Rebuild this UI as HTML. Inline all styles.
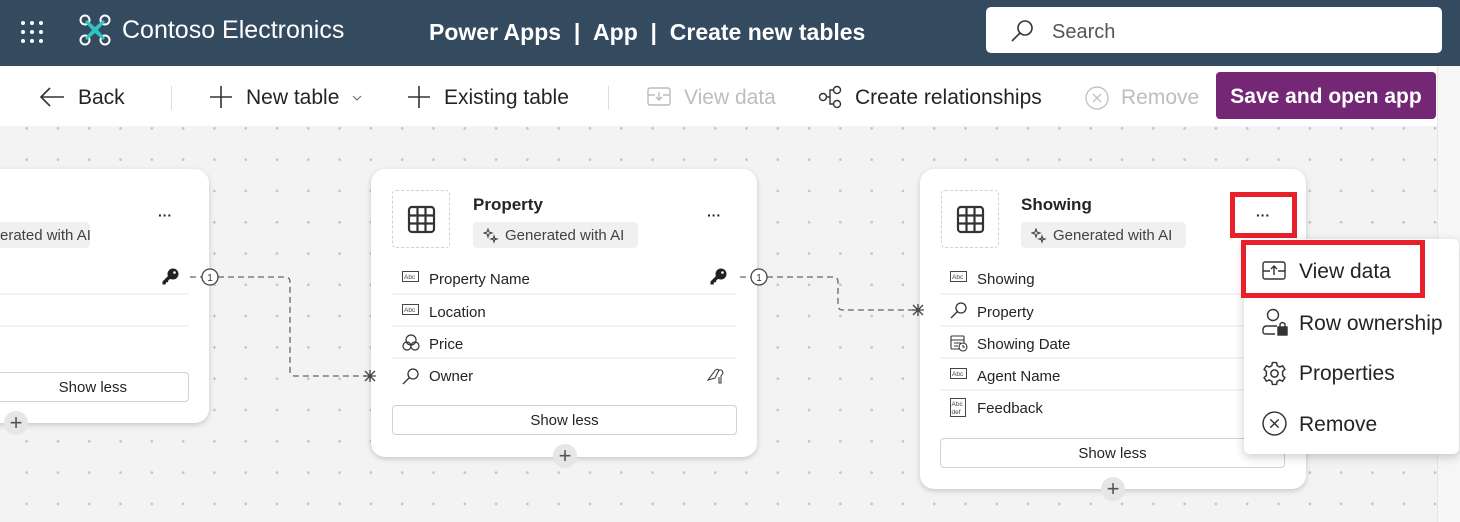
<!DOCTYPE html>
<html><head><meta charset="utf-8"><style>
*{box-sizing:border-box;margin:0;padding:0}
body{width:1460px;height:522px;overflow:hidden;font-family:"Liberation Sans",sans-serif;background:#f3f3f3;position:relative;color:#242424}
.hdr{position:absolute;left:0;top:0;width:1460px;height:66px;background:#344a5f;color:#fff}
.tb{position:absolute;left:0;top:66px;width:1437px;height:60px;background:#fff}
.canvas{position:absolute;left:0;top:126px;width:1437px;height:396px;background-color:#f3f3f3;background-image:radial-gradient(circle,#c4c4c4 1.1px,transparent 1.6px);background-size:31.3px 31.3px;background-position:11px 18px}
.sb{position:absolute;left:1437px;top:66px;width:23px;height:456px;background:#f6f6f6;border-left:1px solid #e6e6e6}
.t{position:absolute;white-space:nowrap}
.card{position:absolute;background:#fff;border-radius:14px;box-shadow:0 2px 6px rgba(0,0,0,.18)}
.ib{position:absolute;width:58px;height:58px;border:1px dashed #d0d0d0;border-radius:4px}
.badge{position:absolute;height:26px;background:#f0f0f0;border-radius:4px;font-size:15px;color:#424242;padding:5px 0 0 32px}
.row{position:absolute;height:32px;border-bottom:2px solid #f3f3f3;font-size:15px;padding:9px 0 0 37px}
.sl{position:absolute;height:30px;border:1px solid #d1d1d1;border-radius:4px;font-size:15px;text-align:center;line-height:29px;background:#fff}
.plus{position:absolute;width:24px;height:24px;border-radius:12px;background:#e6e6e6;text-align:center;line-height:23px;font-size:22px;color:#555}
.dots{position:absolute;font-size:14px;font-weight:bold;letter-spacing:0px}
.tbtxt{font-size:21px;color:#242424}
</style></head><body>
<div class="hdr">
 <svg class="t" style="left:20px;top:20px" width="24" height="24" viewBox="0 0 24 24" fill="#fff"><circle cx="3" cy="3" r="2"/><circle cx="12" cy="3" r="2"/><circle cx="21" cy="3" r="2"/><circle cx="3" cy="12" r="2"/><circle cx="12" cy="12" r="2"/><circle cx="21" cy="12" r="2"/><circle cx="3" cy="21" r="2"/><circle cx="12" cy="21" r="2"/><circle cx="21" cy="21" r="2"/></svg>
 <svg class="t" style="left:79px;top:14px" width="32" height="32" viewBox="0 0 32 32"><g fill="none" stroke="#fff" stroke-width="2"><circle cx="6" cy="6" r="4.5"/><circle cx="26" cy="6" r="4.5"/><circle cx="6" cy="26" r="4.5"/><circle cx="26" cy="26" r="4.5"/></g><path d="M8 6 L16 13 L24 6 L26 8 L19 16 L26 24 L24 26 L16 19 L8 26 L6 24 L13 16 L6 8Z" fill="#2ec4c4"/></svg>
 <div class="t" style="left:122px;top:16px;font-size:25px">Contoso Electronics</div>
 <div class="t" style="left:429px;top:19px;font-size:23px;font-weight:bold">Power Apps&nbsp; | &nbsp;App&nbsp; | &nbsp;Create new tables</div>
 <div class="t" style="left:986px;top:7px;width:456px;height:46px;background:#fff;border-radius:5px"></div>
 <svg class="t" style="left:1010px;top:19px" width="24" height="24" viewBox="0 0 24 24" fill="none" stroke="#333" stroke-width="1.6"><circle cx="15" cy="9" r="7"/><path d="M10 14 L2 22"/></svg>
 <div class="t" style="left:1052px;top:21px;font-size:20px;color:#555">Search</div>
</div>
<div class="tb">
 <svg class="t" style="left:39px;top:20px" width="26" height="22" viewBox="0 0 26 22" fill="none" stroke="#333" stroke-width="1.6"><path d="M25 11H2M11 2L2 11L11 20"/></svg>
 <div class="t tbtxt" style="left:78px;top:20px">Back</div>
 <div class="t" style="left:171px;top:20px;width:1px;height:24px;background:#ddd"></div>
 <svg class="t" style="left:209px;top:19px" width="24" height="24" viewBox="0 0 24 24" stroke="#333" stroke-width="1.6"><path d="M12 1V23M1 12H23"/></svg>
 <div class="t tbtxt" style="left:246px;top:20px">New table</div>
 <svg class="t" style="left:352px;top:29px" width="10" height="6" viewBox="0 0 10 6" fill="none" stroke="#666"><path d="M1 1L5 5L9 1"/></svg>
 <svg class="t" style="left:407px;top:19px" width="24" height="24" viewBox="0 0 24 24" stroke="#333" stroke-width="1.6"><path d="M12 1V23M1 12H23"/></svg>
 <div class="t tbtxt" style="left:444px;top:20px">Existing table</div>
 <div class="t" style="left:608px;top:20px;width:1px;height:24px;background:#ddd"></div>
 <svg class="t" style="left:647px;top:21px" width="24" height="20" viewBox="0 0 24 20" fill="none" stroke="#bbb" stroke-width="1.4"><rect x="1" y="1" width="22" height="17" rx="2"/><path d="M1 8H8M16 8H23M12 5V13M9 10L12 13L15 10"/></svg>
 <div class="t tbtxt" style="left:684px;top:20px;color:#bdbdbd">View data</div>
 <svg class="t" style="left:818px;top:19px" width="26" height="24" viewBox="0 0 26 24" fill="none" stroke="#333" stroke-width="1.4"><circle cx="5" cy="12" r="3.5"/><circle cx="19" cy="5" r="3.5"/><circle cx="19" cy="19" r="3.5"/><path d="M8.5 12H12V5H15.5M12 12V19H15.5"/></svg>
 <div class="t tbtxt" style="left:855px;top:20px">Create relationships</div>
 <svg class="t" style="left:1085px;top:20px" width="24" height="24" viewBox="0 0 24 24" fill="none" stroke="#c4c4c4" stroke-width="1.4"><circle cx="12" cy="12" r="11"/><path d="M8 8L16 16M16 8L8 16"/></svg>
 <div class="t tbtxt" style="left:1121px;top:20px;color:#bdbdbd">Remove</div>
 <div class="t" style="left:1216px;top:6px;width:220px;height:47px;background:#742774;border-radius:4px;color:#fff;font-size:21px;font-weight:bold;text-align:center;padding-top:13px;line-height:24px">Save and open app</div>
</div>
<div class="canvas"></div>
<div class="sb"></div>

<!-- left card -->
<div class="card" style="left:-20px;top:169px;width:229px;height:254px"></div>
<div class="dots t" style="left:158px;top:207px">···</div>
<div class="badge t" style="left:-20px;top:222px;width:110px;padding-left:20px">erated with AI</div>
<div class="row t" style="left:0;top:262px;width:189px;height:33px"></div>
<div class="row t" style="left:0;top:295px;width:189px"></div>
<div class="row t" style="left:0;top:327px;width:189px;border-bottom:none"></div>
<svg class="t" style="left:161px;top:268px" width="18" height="18" viewBox="0 0 18 18"><circle cx="12" cy="6" r="5.5" fill="#222"/><path d="M8 7L1.5 13.5L1.5 16.5L4.5 16.5L5 14.5L7 14L7.5 12L11 10Z" fill="#222"/><circle cx="13.5" cy="4.5" r="1.3" fill="#fff"/></svg>
<div class="sl t" style="left:-20px;top:372px;width:209px">&nbsp;&nbsp;&nbsp;&nbsp;Show less</div>
<div class="plus t" style="left:4px;top:411px">+</div>

<!-- property card -->
<div class="card" style="left:371px;top:169px;width:386px;height:288px"></div>
<div class="ib" style="left:392px;top:190px"></div>
<svg class="t" style="left:407px;top:205px" width="29" height="29" viewBox="0 0 29 29" fill="none" stroke="#333" stroke-width="2.2"><rect x="2" y="2" width="25" height="25" rx="3"/><path d="M10.5 2V27M18.5 2V27M2 10.5H27M2 18.5H27"/></svg>
<div class="t" style="left:473px;top:195px;font-size:17px;font-weight:bold">Property</div>
<div class="badge t" style="left:473px;top:222px;width:165px">Generated with AI</div>
<svg class="t" style="left:483px;top:228px" width="16" height="16" viewBox="0 0 16 16" fill="none" stroke="#444" stroke-width="1.1"><path d="M5 1L6 4L9 5L6 6L5 9L4 6L1 5L4 4Z"/><path d="M11 8L11.7 10.3L14 11L11.7 11.7L11 14L10.3 11.7L8 11L10.3 10.3Z"/></svg>
<div class="dots t" style="left:707px;top:207px">···</div>
<div class="row t" style="left:392px;top:262px;width:345px;height:33px">Property Name</div>
<div class="row t" style="left:392px;top:295px;width:345px">Location</div>
<div class="row t" style="left:392px;top:327px;width:345px">Price</div>
<div class="row t" style="left:392px;top:359px;width:345px;border-bottom:none">Owner</div>
<svg class="t" style="left:402px;top:271px" width="17" height="14" viewBox="0 0 17 14"><rect x=".5" y=".5" width="16" height="10" fill="none" stroke="#444"/><text x="2" y="8" font-size="6.5" fill="#444" font-family="Liberation Sans">Abc</text></svg>
<svg class="t" style="left:402px;top:304px" width="17" height="14" viewBox="0 0 17 14"><rect x=".5" y=".5" width="16" height="10" fill="none" stroke="#444"/><text x="2" y="8" font-size="6.5" fill="#444" font-family="Liberation Sans">Abc</text></svg>
<svg class="t" style="left:402px;top:334px" width="18" height="18" viewBox="0 0 18 18" fill="none" stroke="#333" stroke-width="1.2"><circle cx="9" cy="6" r="5"/><circle cx="5" cy="12" r="4"/><circle cx="13" cy="12" r="4"/></svg>
<svg class="t" style="left:402px;top:367px" width="18" height="18" viewBox="0 0 18 18" fill="none" stroke="#333" stroke-width="1.3"><circle cx="11" cy="7" r="5"/><path d="M7.5 10.5L1 17"/></svg>
<svg class="t" style="left:709px;top:268px" width="18" height="18" viewBox="0 0 18 18"><circle cx="12" cy="6" r="5.5" fill="#222"/><path d="M8 7L1.5 13.5L1.5 16.5L4.5 16.5L5 14.5L7 14L7.5 12L11 10Z" fill="#222"/><circle cx="13.5" cy="4.5" r="1.3" fill="#fff"/></svg>
<svg class="t" style="left:706px;top:366px" width="20" height="18" viewBox="0 0 20 18" fill="none" stroke="#444" stroke-width="1.1"><path d="M2 14L8 6Q10 2 13 4L9 12ZM12 5Q16 2 17 7L15 10L15 17L13 17L13 11"/></svg>
<div class="sl t" style="left:392px;top:405px;width:345px">Show less</div>
<div class="plus t" style="left:553px;top:444px">+</div>

<!-- showing card -->
<div class="card" style="left:920px;top:169px;width:386px;height:320px"></div>
<div class="ib" style="left:941px;top:190px"></div>
<svg class="t" style="left:956px;top:205px" width="29" height="29" viewBox="0 0 29 29" fill="none" stroke="#333" stroke-width="2.2"><rect x="2" y="2" width="25" height="25" rx="3"/><path d="M10.5 2V27M18.5 2V27M2 10.5H27M2 18.5H27"/></svg>
<div class="t" style="left:1021px;top:195px;font-size:17px;font-weight:bold">Showing</div>
<div class="badge t" style="left:1021px;top:222px;width:165px">Generated with AI</div>
<svg class="t" style="left:1031px;top:228px" width="16" height="16" viewBox="0 0 16 16" fill="none" stroke="#444" stroke-width="1.1"><path d="M5 1L6 4L9 5L6 6L5 9L4 6L1 5L4 4Z"/><path d="M11 8L11.7 10.3L14 11L11.7 11.7L11 14L10.3 11.7L8 11L10.3 10.3Z"/></svg>
<div class="dots t" style="left:1256px;top:207px">···</div>
<div class="t" style="left:1230px;top:192px;width:67px;height:46px;border:5px solid #e8202a"></div>
<div class="row t" style="left:940px;top:262px;width:345px;height:33px">Showing</div>
<div class="row t" style="left:940px;top:295px;width:345px">Property</div>
<div class="row t" style="left:940px;top:327px;width:345px">Showing Date</div>
<div class="row t" style="left:940px;top:359px;width:345px">Agent Name</div>
<div class="row t" style="left:940px;top:391px;width:345px;border-bottom:none">Feedback</div>
<svg class="t" style="left:950px;top:271px" width="17" height="14" viewBox="0 0 17 14"><rect x=".5" y=".5" width="16" height="10" fill="none" stroke="#444"/><text x="2" y="8" font-size="6.5" fill="#444" font-family="Liberation Sans">Abc</text></svg>
<svg class="t" style="left:950px;top:301px" width="18" height="18" viewBox="0 0 18 18" fill="none" stroke="#333" stroke-width="1.3"><circle cx="11" cy="7" r="5"/><path d="M7.5 10.5L1 17"/></svg>
<svg class="t" style="left:950px;top:334px" width="18" height="18" viewBox="0 0 18 18" fill="none" stroke="#333" stroke-width="1.1"><rect x="1" y="2" width="13" height="13" rx="1"/><path d="M1 6H14M4 9H11M4 12H8"/><circle cx="13" cy="13" r="4" fill="#fff"/><path d="M13 11V13H15"/></svg>
<svg class="t" style="left:950px;top:368px" width="17" height="14" viewBox="0 0 17 14"><rect x=".5" y=".5" width="16" height="10" fill="none" stroke="#444"/><text x="2" y="8" font-size="6.5" fill="#444" font-family="Liberation Sans">Abc</text></svg>
<svg class="t" style="left:950px;top:398px" width="16" height="20" viewBox="0 0 16 20"><rect x=".5" y=".5" width="15" height="18" fill="none" stroke="#444"/><text x="1.5" y="8" font-size="6.5" fill="#444" font-family="Liberation Sans">Abc</text><text x="1.5" y="16" font-size="6.5" fill="#444" font-family="Liberation Sans">def</text></svg>
<div class="sl t" style="left:940px;top:438px;width:345px">Show less</div>
<div class="plus t" style="left:1101px;top:477px">+</div>

<!-- connectors -->
<svg class="t" style="left:0;top:0" width="1460" height="522">
 <g fill="none" stroke="#666" stroke-width="1.3" stroke-dasharray="6 4">
  <path d="M190 277H202M218 277H285Q290 277 290 282V371Q290 376 295 376H366"/>
  <path d="M740 277H751M767 277H833Q838 277 838 282V305Q838 310 843 310H914"/>
 </g>
 <g fill="#fff" stroke="#444" stroke-width="1.3"><circle cx="210" cy="277" r="8"/><circle cx="759" cy="277" r="8"/></g>
 <g font-size="10" font-family="Liberation Sans" fill="#333" text-anchor="middle"><text x="210" y="281">1</text><text x="759" y="281">1</text></g>
 <g stroke="#444" stroke-width="1.3"><path d="M364 376H376M370 370V382M365 371L375 381M375 371L365 381"/><path d="M912 310H924M918 304V316M913 305L923 315M923 305L913 315"/></g>
</svg>

<!-- menu -->
<div class="t" style="left:1244px;top:239px;width:215px;height:215px;background:#fff;border-radius:6px;box-shadow:0 3px 10px rgba(0,0,0,.2)"></div>
<div class="t" style="left:1241px;top:240px;width:184px;height:58px;border:5px solid #e8202a"></div>
<svg class="t" style="left:1262px;top:261px" width="24" height="20" viewBox="0 0 24 20" fill="none" stroke="#333" stroke-width="1.4"><rect x="1" y="1" width="22" height="17" rx="2"/><path d="M1 10H8M16 10H23M12 14V5M9 8L12 5L15 8"/></svg>
<div class="t" style="left:1299px;top:260px;font-size:21px">View data</div>
<svg class="t" style="left:1262px;top:308px" width="26" height="28" viewBox="0 0 26 28" fill="none" stroke="#333" stroke-width="1.4"><circle cx="11" cy="7" r="5.5"/><path d="M15 18H5Q1 18 1 22V24Q1 26 4 26H13"/><rect x="16" y="19" width="9" height="8" fill="#333"/><path d="M18 19V16Q20.5 13 23 16V19"/></svg>
<div class="t" style="left:1299px;top:312px;font-size:21px">Row ownership</div>
<svg class="t" style="left:1262px;top:361px" width="25" height="25" viewBox="0 0 24 24" fill="none" stroke="#333" stroke-width="1.4"><circle cx="12" cy="12" r="3.5"/><path d="M10 1.5H14L14.6 4.5L17 5.8L19.8 4.6L22 8L19.8 10L19.8 14L22 16L19.8 19.4L17 18.2L14.6 19.5L14 22.5H10L9.4 19.5L7 18.2L4.2 19.4L2 16L4.2 14L4.2 10L2 8L4.2 4.6L7 5.8L9.4 4.5Z"/></svg>
<div class="t" style="left:1299px;top:362px;font-size:21px">Properties</div>
<svg class="t" style="left:1262px;top:411px" width="25" height="25" viewBox="0 0 24 24" fill="none" stroke="#333" stroke-width="1.4"><circle cx="12" cy="12" r="11"/><path d="M8 8L16 16M16 8L8 16"/></svg>
<div class="t" style="left:1299px;top:413px;font-size:21px">Remove</div>
</body></html>
